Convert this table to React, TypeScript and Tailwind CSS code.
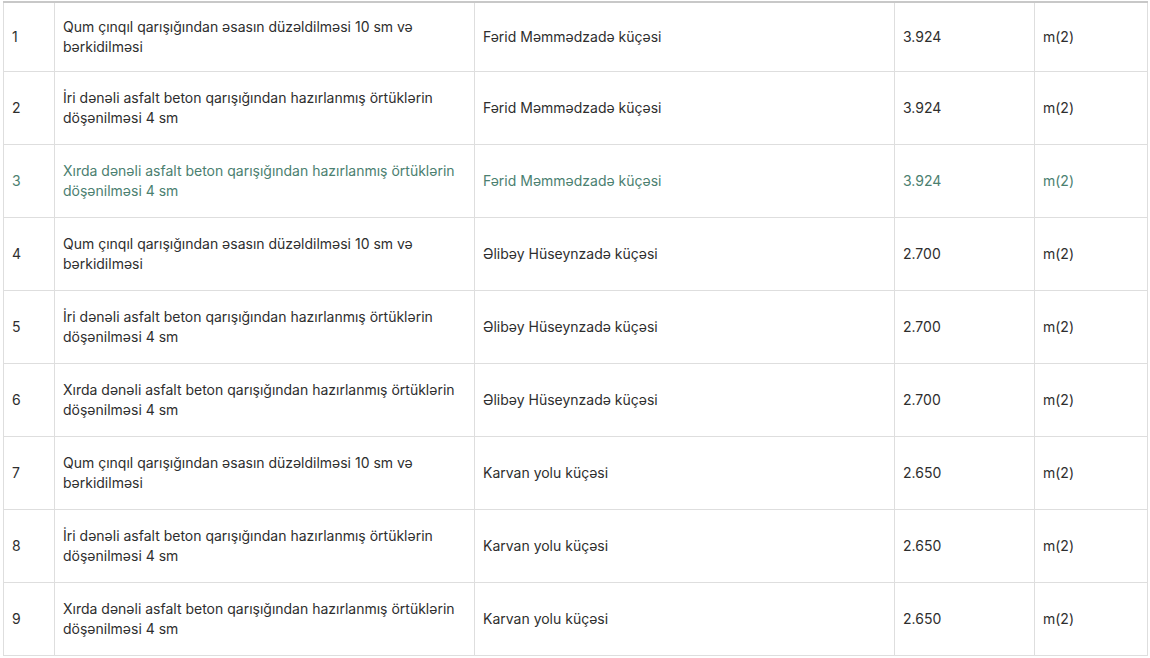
import React from 'react';

interface Row {
  n: number;
  work: string;
  street: string;
  qty: string;
  unit: string;
}

const works = [
  'Qum çınqıl qarışığından əsasın düzəldilməsi 10 sm və bərkidilməsi',
  'İri dənəli asfalt beton qarışığından hazırlanmış örtüklərin döşənilməsi 4 sm',
  'Xırda dənəli asfalt beton qarışığından hazırlanmış örtüklərin döşənilməsi 4 sm',
];

const streets: [string, string][] = [
  ['Fərid Məmmədzadə küçəsi', '3.924'],
  ['Əlibəy Hüseynzadə küçəsi', '2.700'],
  ['Karvan yolu küçəsi', '2.650'],
];

const rows: Row[] = streets.flatMap(([street, qty], si) =>
  works.map((work, wi) => ({ n: si * 3 + wi + 1, work, street, qty, unit: 'm(2)' }))
);

export default function App() {
  return (
    <div className="min-h-screen bg-white pl-[3px] pt-[1px] font-['Inter',sans-serif] text-[14px] leading-[20px] text-[#2e2e2e]">
      <table className="w-[1144px] table-fixed border-collapse">
        <colgroup>
          <col className="w-[51px]" />
          <col className="w-[420px]" />
          <col className="w-[420px]" />
          <col className="w-[140px]" />
          <col className="w-[113px]" />
        </colgroup>
        <tbody>
          {rows.map(r => (
            <tr
              key={r.n}
              className={`${r.n === 1 ? 'h-[69px] border-t-2 border-t-[#c8c8c8]' : 'h-[73px]'} ${r.n === 3 ? 'text-[#4b8070]' : ''}`}
            >
              <td className="border border-[#dedede] px-2 py-3 align-middle">{r.n}</td>
              <td className="border border-[#dedede] px-2 py-3 align-middle">{r.work}</td>
              <td className="border border-[#dedede] px-2 py-3 align-middle">{r.street}</td>
              <td className="border border-[#dedede] px-2 py-3 align-middle">{r.qty}</td>
              <td className="border border-[#dedede] px-2 py-3 align-middle">{r.unit}</td>
            </tr>
          ))}
        </tbody>
      </table>
    </div>
  );
}
